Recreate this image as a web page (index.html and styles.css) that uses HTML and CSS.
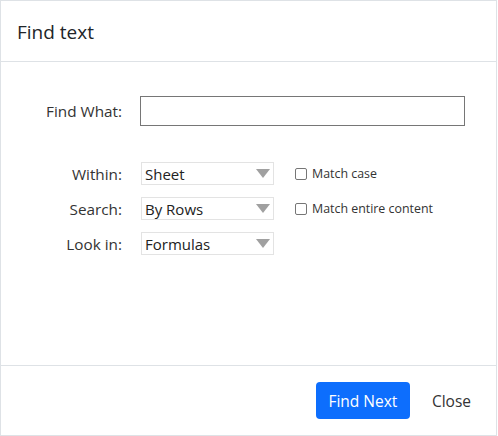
FILE: index.html
```html
<!DOCTYPE html>
<html>
<head>
<meta charset="utf-8">
<link rel="stylesheet" href="styles.css">
</head>
<body>
<div class="dialog">
  <div class="header">Find text</div>
  <div class="body">
    <div class="row find-row">
      <label class="lbl">Find What:</label>
      <div class="text-input"></div>
    </div>
    <div class="opts">
      <div class="row">
        <label class="lbl">Within:</label>
        <div class="select"><span>Sheet</span><i class="arrow"></i></div>
        <label class="chk"><span class="box"></span>Match case</label>
      </div>
      <div class="row">
        <label class="lbl">Search:</label>
        <div class="select"><span>By Rows</span><i class="arrow"></i></div>
        <label class="chk"><span class="box"></span>Match entire content</label>
      </div>
      <div class="row">
        <label class="lbl">Look in:</label>
        <div class="select"><span>Formulas</span><i class="arrow"></i></div>
      </div>
    </div>
  </div>
  <div class="footer">
    <button class="btn primary">Find Next</button>
    <button class="btn link">Close</button>
  </div>
</div>
</body>
</html>
```
FILE: styles.css
```css
html, body { margin: 0; padding: 0; background: #fff; }
body { font-family: "Open Sans", "Noto Sans", sans-serif; color: #333; }
.dialog {
  width: 495px; height: 434px;
  border: 1px solid #dee2e6;
  display: flex; flex-direction: column;
}
.header {
  height: 61px; box-sizing: border-box;
  border-bottom: 1px solid #dee2e6;
  padding: 18px 0 0 16px;
  font-size: 19px; font-weight: 500; color: #212529;
}
.body { flex: 1; padding-top: 34px; }
.row { display: flex; align-items: center; }
.lbl {
  width: 121px; text-align: right; font-size: 15.3px; color: #333;
  flex: none;
}
.find-row .text-input {
  margin-left: 18px; width: 323px; height: 28px;
  border: 1px solid #767676;
}
.opts { margin-top: 36px; display: flex; flex-direction: column; gap: 12px; }
.select {
  margin-left: 19px; width: 133px; height: 23px; box-sizing: border-box;
  border: 1px solid #e3e3e3; display: flex; align-items: center;
  justify-content: space-between; padding: 0 3px 0 3px;
  font-size: 15px; color: #222;
}
.arrow {
  width: 0; height: 0;
  border-left: 7px solid transparent; border-right: 7px solid transparent;
  border-top: 9px solid #a0a0a0;
}
.chk { display: flex; align-items: center; margin-left: 21px; font-size: 12.4px; color: #333; }
.box {
  width: 12px; height: 12px; border: 1px solid #767676; border-radius: 2px;
  margin-right: 5px; box-sizing: border-box;
}
.footer {
  height: 70px; box-sizing: border-box; border-top: 1px solid #dee2e6;
  display: flex; align-items: center; justify-content: flex-end;
  padding-right: 13px; gap: 10px;
}
.btn { font-family: inherit; font-size: 15.5px; border: none; cursor: pointer; }
.primary {
  background: #0d6efd; color: #fff; border-radius: 4px;
  width: 94px; height: 37px;
}
.link { background: none; color: #333; padding: 0 12px; height: 37px; }
```
